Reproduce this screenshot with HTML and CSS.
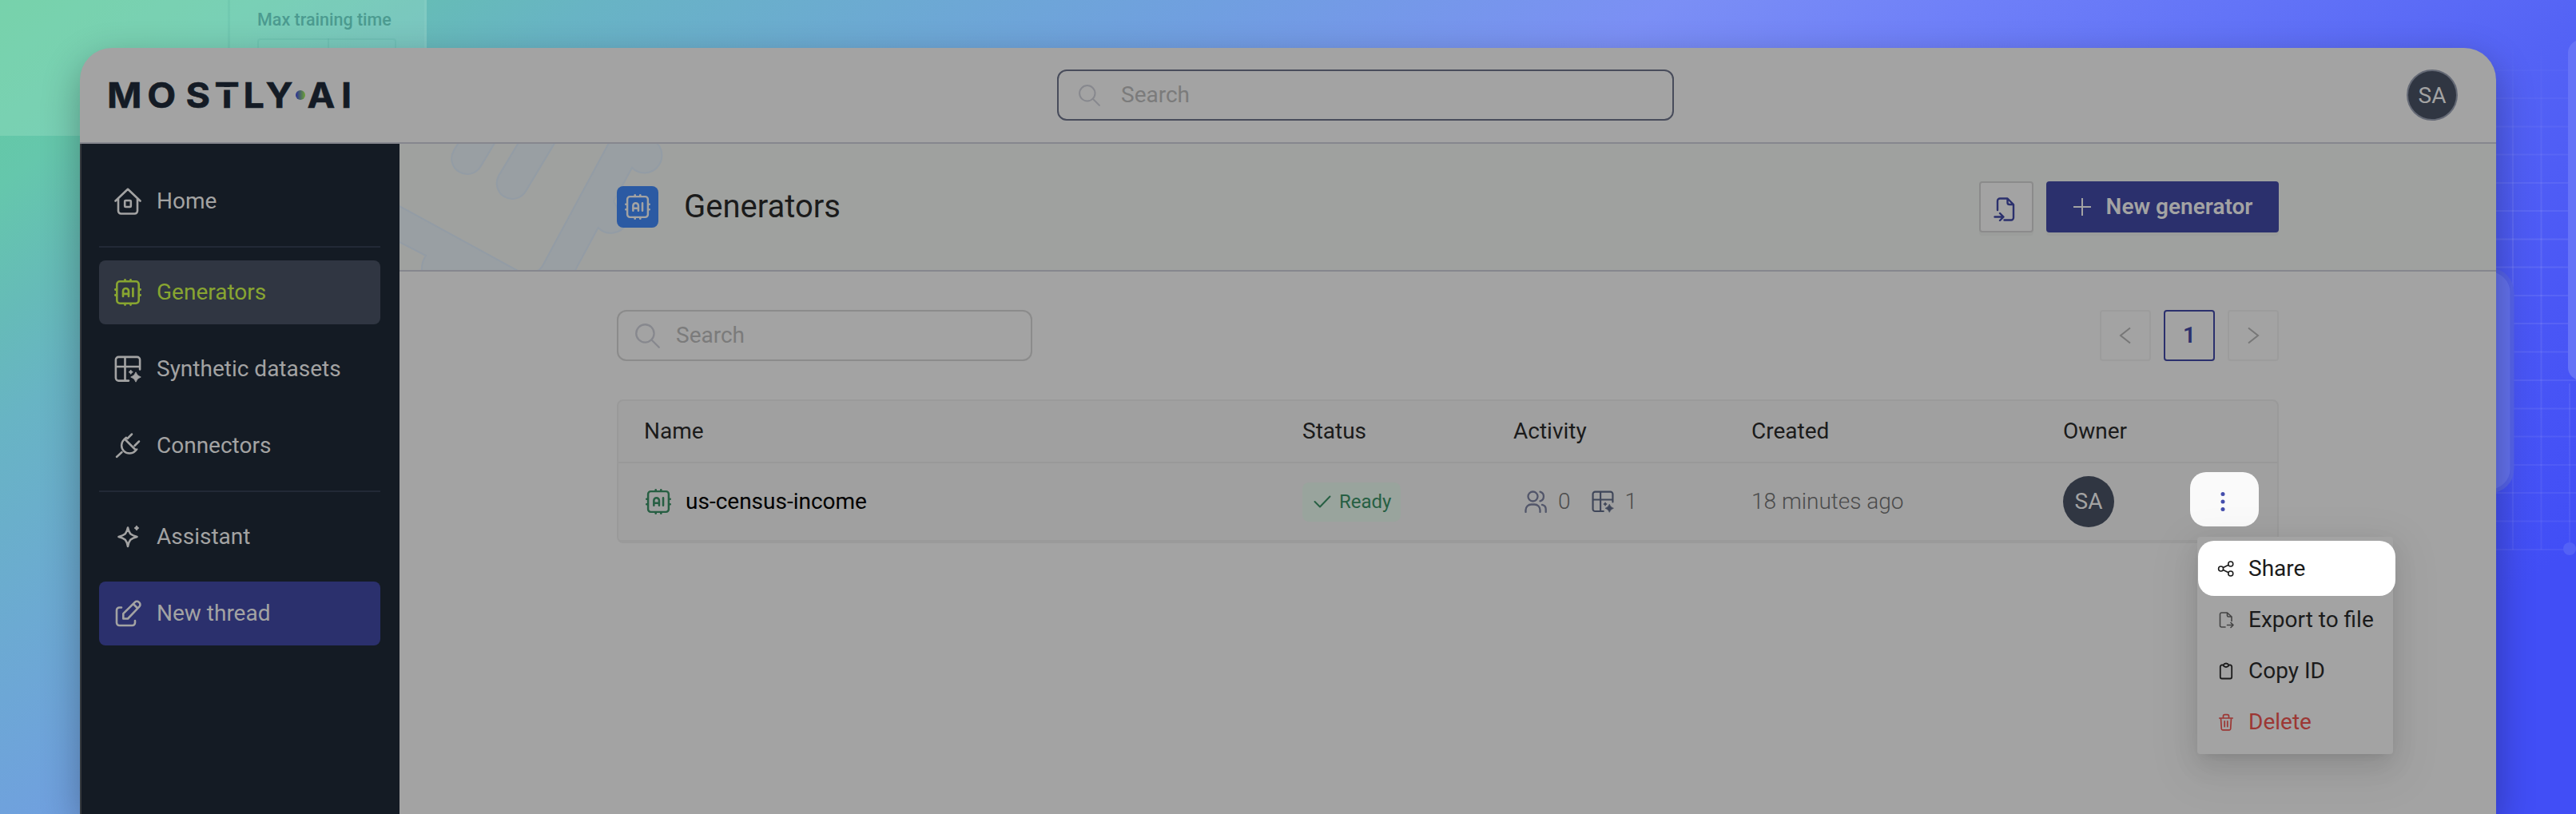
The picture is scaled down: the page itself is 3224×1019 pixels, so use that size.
FILE: index.html
```html
<!DOCTYPE html>
<html lang="en">
<head>
<meta charset="utf-8">
<title>MOSTLY AI – Generators</title>
<link rel="stylesheet" href="styles.css">
</head>
<body>
<svg class="defs" width="0" height="0" aria-hidden="true">
  <defs>
    <symbol id="i-chip" viewBox="0 0 34 34">
      <g fill="none" stroke="currentColor" stroke-linecap="round" stroke-linejoin="round">
        <rect x="3.300" y="3.300" width="27.400" height="27.400" rx="3.600" stroke-width="2.600"/>
        <path stroke-width="2.800" d="M13.500 1.400v1M20.500 1.400v1M13.500 31.600v1M20.500 31.600v1M1.400 13.500h1M1.400 20.500h1M31.600 13.500h1M31.600 20.500h1"/>
        <path stroke-width="2.700" d="M11 22v-6.500a3.500 3.500 0 0 1 7 0V22M11 18.800h7M23.400 12v10"/>
      </g>
    </symbol>
    <symbol id="i-grid" viewBox="0 0 34 34">
      <path fill="none" stroke="currentColor" stroke-width="2.600" stroke-linecap="round" stroke-linejoin="round" d="M18 31.600H5.400a3.500 3.500 0 0 1-3.500-3.500V5.400a3.500 3.500 0 0 1 3.500-3.500h23.200a3.500 3.500 0 0 1 3.500 3.500V17.500M2 14h30M13.500 2v29.500"/>
      <path fill="currentColor" d="M27 20.800q1.600 4.800 6.300 6.200q-4.700 1.400-6.300 6.200q-1.600-4.800-6.300-6.200q4.700-1.400 6.300-6.200zM20.700 18q.7 2 2.700 2.700q-2 .7-2.700 2.700q-.7-2-2.700-2.700q2-.7 2.700-2.700z" stroke="currentColor" stroke-width=".8"/>
    </symbol>
    <symbol id="i-search" viewBox="0 0 30 30">
      <g fill="none" stroke="currentColor" stroke-width="2.200" stroke-linecap="round"><circle cx="12" cy="12" r="10.800"/><path d="M19.800 19.800l9 9"/></g>
    </symbol>
    <linearGradient id="dot"><stop offset="0" stop-color="#2b2f96"/><stop offset="1" stop-color="#6ba335"/></linearGradient>
    <linearGradient id="fade" x1="0" y1="0" x2="0" y2="1"><stop offset="0" stop-color="#fff" stop-opacity="0"/><stop offset=".2" stop-color="#fff" stop-opacity=".6"/><stop offset=".4" stop-color="#fff"/><stop offset="1" stop-color="#fff" stop-opacity=".6"/></linearGradient>
    <mask id="gridfade" maskUnits="userSpaceOnUse" x="0" y="0" width="124" height="1019"><rect y="40" width="124" height="655" fill="url(#fade)"/></mask>
  </defs>
</svg>

<div class="backdrop" aria-hidden="true">
  <div class="ghost-left">
    <span class="ghost-label">Max training time</span>
    <span class="ghost-input"></span>
  </div>
  <svg class="ghost-right" width="124" height="1019" viewBox="0 0 124 1019">
    <g stroke="#fff" stroke-opacity=".09" stroke-width="2" fill="none" mask="url(#gridfade)">
      <path d="M45 60V688M80.500 60V688M116 480V688"/>
      <path d="M0 53h124M0 88h124M0 123h124M0 158.500h124M0 193.500h124M0 229h124M0 264h124M0 299.500h124M0 334.500h124M0 370h124M0 405h124M0 440.500h124M0 476h124M0 511.500h124M0 546.500h124M0 582h124M0 617h124M0 652.500h124M0 688h116"/>
    </g>
    <circle cx="116" cy="687" r="8" fill="#5361f6"/>
    <rect x="114" y="50" width="60" height="426" rx="16" fill="#6673f7"/>
    <rect x="-60" y="338" width="104" height="277" rx="28" fill="#6472ef" stroke="#5563ea" stroke-width="5"/>
  </svg>
</div>

<div class="window">
  <header class="topbar">
    <svg class="logo" width="326" height="60" viewBox="-10 0 326 60">
      <text class="logo-text" y="46" transform="scale(1.060 1)" x="-2 45.500 91 125 159 185.500 234.500 274.500">MOSTLYAI</text>
      <path d="M132 20h33v3.500h-33z" fill="#a3a3a3"/>
      <circle cx="240" cy="30" r="6" fill="url(#dot)"/>
    </svg>
    <div class="field field-top"><svg width="27" height="27"><use href="#i-search"/></svg><span>Search</span></div>
    <div class="avatar avatar-top">SA</div>
  </header>

  <div class="body">
    <nav class="sidebar">
      <a class="nav">
        <svg width="34" height="34" viewBox="0 0 34 34" fill="none" stroke="currentColor" stroke-width="2.600" stroke-linecap="round" stroke-linejoin="round"><path d="M1.500 16.500L17 1.800l15.500 14.700M5 14v15a3.500 3.500 0 0 0 3.500 3.500h17A3.500 3.500 0 0 0 29 29V14"/><rect x="13.200" y="16" width="7.600" height="8" rx="1"/></svg>
        Home</a>
      <hr>
      <a class="nav active"><svg width="34" height="34"><use href="#i-chip"/></svg>Generators</a>
      <a class="nav"><svg width="34" height="34"><use href="#i-grid"/></svg>Synthetic datasets</a>
      <a class="nav">
        <svg width="34" height="34" viewBox="0 0 34 34" fill="none" stroke="currentColor" stroke-width="2.500" stroke-linecap="round" stroke-linejoin="round"><path d="M13 8.500L26.500 22M15 6.800L12 9.500a10.200 10.200 0 0 0 0 14.200a10.200 10.200 0 0 0 14.200 0l2-2.200M16.500 8L22 2.500M25.500 17L31 11.500M9.500 25L3 31"/></svg>
        Connectors</a>
      <hr>
      <a class="nav">
        <svg width="34" height="34" viewBox="0 0 34 34" fill="none" stroke="currentColor" stroke-width="2.600" stroke-linejoin="round"><path d="M17 5.500q1 5 3.200 7.800q2.800 2.200 8.300 3.700q-5.500 1.500-8.300 3.700q-2.200 2.800-3.200 8.300q-1-5.500-3.200-8.300q-2.800-2.200-8.300-3.700q5.500-1.500 8.300-3.700q2.200-2.800 3.200-7.800z"/><path d="M28 3.800q.6 1.600 2.200 2.200q-1.600.6-2.200 2.200q-.6-1.600-2.200-2.200q1.600-.6 2.200-2.200z" fill="currentColor" stroke-width="1.800"/></svg>
        Assistant</a>
      <a class="nav primary">
        <svg width="34" height="34" viewBox="0 0 34 34" fill="none" stroke="currentColor" stroke-width="2.600" stroke-linecap="round" stroke-linejoin="round"><path d="M9 9.500H6.500A3.500 3.500 0 0 0 3 13v15.500A3.500 3.500 0 0 0 6.500 32h16a3.500 3.500 0 0 0 3.500-3.500V26M11.300 23.500v-6.300L25.800 2.800a3.500 3.500 0 0 1 5 0l.6.600a3.500 3.500 0 0 1 0 5L17 23.500zM23.800 5l5.500 5.500"/></svg>
        New thread</a>
    </nav>

    <main class="main">
      <section class="pagehead">
        <svg class="pattern" width="340" height="158" viewBox="0 0 340 158" fill="#999fa3" stroke="#939ca5" stroke-width="2" aria-hidden="true">
          <rect x="-19.500" y="-90" width="39" height="110" rx="19.500" transform="translate(85 18) rotate(31)"/>
          <rect x="-19.500" y="-110" width="39" height="130" rx="19.500" transform="translate(141.500 49) rotate(31)"/>
          <path d="M262-1L180 151q-4 8-10 9h49L248.600 105A22 22 0 0 0 284 100L268 72L291 30A21 21 0 0 0 322-1z"/>
          <path d="M-2 77L150 160H28q-1-11 5-20L-2 122z"/>
        </svg>
        <div class="wrap headrow">
          <span class="tile"><svg width="32" height="32"><use href="#i-chip"/></svg></span>
          <h1>Generators</h1>
          <button class="btn btn-icon" aria-label="Import">
            <svg width="28" height="30" viewBox="0 0 28 30" fill="none" stroke="currentColor" stroke-width="2.400" stroke-linecap="round" stroke-linejoin="round"><path d="M5 16V4.500A3 3 0 0 1 8 1.500h9.500L25 9v16.500a3 3 0 0 1-3 3h-8.500M17.500 2v4.500A2.500 2.500 0 0 0 20 9h4.500M1.500 24.500H12M8 20l4.500 4.500L8 29"/></svg>
          </button>
          <button class="btn btn-new">
            <svg width="24" height="24" viewBox="0 0 24 24" fill="none" stroke="currentColor" stroke-width="2"><path d="M12 1v22M1 12h22"/></svg>
            New generator</button>
        </div>
      </section>

      <section class="wrap content">
        <div class="tools">
          <div class="field field-list"><svg width="31" height="31"><use href="#i-search"/></svg><span>Search</span></div>
          <div class="pager">
            <span class="page"><svg width="16" height="22" viewBox="0 0 16 22" fill="none" stroke="currentColor" stroke-width="2"><path d="M14 1.500L2 11l12 9.500"/></svg></span>
            <span class="page current">1</span>
            <span class="page"><svg width="16" height="22" viewBox="0 0 16 22" fill="none" stroke="currentColor" stroke-width="2"><path d="M2 1.500L14 11L2 20.500"/></svg></span>
          </div>
        </div>

        <div class="table">
          <div class="tr th"><span>Name</span><span>Status</span><span>Activity</span><span>Created</span><span>Owner</span><span></span></div>
          <div class="tr td">
            <span class="name"><svg width="32" height="32"><use href="#i-chip"/></svg>us-census-income</span>
            <span><span class="tag"><svg width="22" height="16" viewBox="0 0 22 16" fill="none" stroke="currentColor" stroke-width="2" stroke-linecap="round" stroke-linejoin="round"><path d="M1.500 8l6.500 6.500L20.500 1.500"/></svg>Ready</span></span>
            <span class="activity">
              <svg width="28" height="28" viewBox="0 0 28 28" fill="none" stroke="currentColor" stroke-width="2.300" stroke-linecap="round"><ellipse cx="10.500" cy="7.500" rx="6" ry="6"/><path d="M1.500 27v-2.500a7 7 0 0 1 7-7h4a7 7 0 0 1 7 7V27M19.500 1.700a6 6 0 0 1 0 11.600M22 17.800a6 6 0 0 1 4.700 6V27"/></svg>
              <span class="light n0">0</span>
              <svg class="dk" width="28" height="28"><use href="#i-grid"/></svg>
              <span class="light">1</span>
            </span>
            <span class="light">18 minutes ago</span>
            <span><span class="avatar">SA</span></span>
            <span class="more-cell">
              <button class="more" aria-label="More"><svg width="8" height="26" viewBox="0 0 8 26" fill="#444eac"><circle cx="4" cy="3.500" r="2.500"/><circle cx="4" cy="13" r="2.500"/><circle cx="4" cy="22.500" r="2.500"/></svg></button>
              <span class="menu">
                <a class="item hot"><svg width="22" height="22" viewBox="0 0 22 22" fill="none" stroke="currentColor" stroke-width="1.600"><circle cx="4.600" cy="11" r="3"/><circle cx="16.800" cy="5" r="3"/><circle cx="16.800" cy="17" r="3"/><path d="M7.500 9.500l6.500-3.200M7.500 12.500l6.500 3.200"/></svg>Share</a>
                <a class="item soft"><svg width="22" height="22" viewBox="0 0 22 22" fill="none" stroke="currentColor" stroke-width="1.600" stroke-linecap="round" stroke-linejoin="round"><path d="M10 20H5.500a2 2 0 0 1-2-2V4a2 2 0 0 1 2-2h7L18 7v5.500M12.500 2v3.500A1.500 1.500 0 0 0 14 7h4M12.500 17.500H20M17 14.500l3 3l-3 3"/></svg><span>Export to file</span></a>
                <a class="item"><svg width="22" height="22" viewBox="0 0 22 22" fill="none" stroke="currentColor" stroke-width="1.800" stroke-linejoin="round"><path d="M7.500 3.500H5.800A2 2 0 0 0 3.800 5.500v13a2 2 0 0 0 2 2h10.400a2 2 0 0 0 2-2v-13a2 2 0 0 0-2-2H14.500M7.800 3.500Q8.500 1.500 11 1.500T14.200 3.500Q14 6 11 6T7.800 3.500z"/></svg>Copy ID</a>
                <a class="item danger"><svg width="22" height="22" viewBox="0 0 22 22" fill="none" stroke="currentColor" stroke-width="1.700" stroke-linecap="round" stroke-linejoin="round"><path d="M2.800 6h16.400M4.500 6l.8 13.500a1.500 1.500 0 0 0 1.500 1.300h8.400a1.500 1.500 0 0 0 1.500-1.300L17.500 6M7.500 6V3.500a1.800 1.800 0 0 1 1.800-1.800h3.400a1.800 1.800 0 0 1 1.800 1.800V6M9.200 9.800v6.800M12.800 9.800v6.800"/></svg>Delete</a>
              </span>
            </span>
          </div>
        </div>
      </section>
    </main>
  </div>
</div>
</body>
</html>
```

FILE: styles.css
```css
* { box-sizing: border-box; }

html, body { margin: 0; height: 1019px; overflow: hidden; }

body {
  position: relative;
  width: 3224px;
  font: 400 28px/40px Roboto, "Liberation Sans", sans-serif;
  color: #1b1b1b;
  background: linear-gradient(144.5deg, #62ca9e 0%, #65c7ac 7%, #66bbb8 12%, #68b4c4 16%, #6caad2 24%, #709fe0 33%, #7b8ff5 45%, #6f80f8 53%, #6273f7 61%, #5463f5 70%, #4a57f5 80%, #414ef6 90%, #414ef6 100%);
}

.defs { position: absolute; }
svg { display: block; flex: none; }
button { font: inherit; margin: 0; padding: 0; border: 0; }

/* Decorative layer behind the window */
.backdrop { position: absolute; inset: 0; }
.ghost-left {
  width: 534px;
  height: 170px;
  padding: 5px 0 0 322px;
  background: linear-gradient(90deg, transparent 285px, rgba(60, 150, 140, .12) 285px, rgba(60, 150, 140, .12) 288px, transparent 288px), rgba(190, 240, 215, .24);
  border-right: 3px solid rgba(255, 255, 255, .06);
}
.ghost-label { display: block; font-size: 21.5px; font-weight: 500; color: #4c9b90; }
.ghost-input { display: block; width: 174px; height: 70px; margin-top: 3px; border: 2px solid rgba(70, 160, 150, .16); border-radius: 4px; background: linear-gradient(90deg, transparent 86px, rgba(70, 160, 150, .16) 86px, rgba(70, 160, 150, .16) 88px, transparent 88px); }
.ghost-right { position: absolute; right: 0; top: 0; }

.window {
  position: relative;
  display: flex;
  flex-direction: column;
  width: 3024px;
  height: 959px;
  margin: 60px 100px 0;
  background: #a3a3a3;
  border-radius: 40px 40px 0 0;
  box-shadow: 0 16px 48px rgba(0, 0, 0, .3);
}

/* Top bar */
.topbar {
  display: flex;
  align-items: center;
  height: 120px;
  padding: 0 48px 0 26px;
  border-bottom: 2px solid #86878e;
}
.logo-text { font: 700 44px Inter, "Liberation Sans", sans-serif; fill: #141b25; stroke: #141b25; stroke-width: .6px; }

.field {
  display: flex;
  align-items: center;
  height: 64px;
  color: #87888e;
  border: 2px solid #8b8b8b;
  border-radius: 12px;
}
.field span { color: #7b7b7b; }
.field-top { width: 772px; margin-left: 871px; padding-left: 25px; gap: 26px; border-color: #484c5b; }
.field-list { width: 520px; padding-left: 21px; gap: 20px; }

.avatar {
  display: flex;
  align-items: center;
  justify-content: center;
  width: 64px;
  height: 64px;
  border-radius: 50%;
  background: #303642;
  color: #a3a3a3;
}
.avatar-top { margin-left: auto; border: 2px solid #646975; padding-top: 1px; }

.body { display: flex; flex: 1; min-height: 0; }

/* Sidebar */
.sidebar {
  width: 400px;
  padding: 32px 24px 0 22px;
  background: #141b24;
  border-left: 2px solid #34383d;
}
.nav {
  display: flex;
  align-items: center;
  gap: 19px;
  height: 80px;
  margin-bottom: 16px;
  padding-left: 19px;
  border-radius: 8px;
  color: #a3a3a3;
}
.nav.active { background: #303642; color: #88a531; }
.nav.primary { background: #2b306d; }
.sidebar hr { height: 2px; margin: 0 0 16px; border: 0; background: #222936; }

/* Page header */
.main { flex: 1; min-width: 0; }
.wrap { width: 2080px; margin: 0 auto; }
.pagehead { position: relative; height: 160px; background: #9fa19f; border-bottom: 2px solid #86878e; }
.pattern { position: absolute; left: 0; top: 0; }
.headrow { position: relative; display: flex; align-items: center; height: 158px; }
.tile { display: flex; align-items: center; justify-content: center; width: 52px; height: 52px; border-radius: 8px; background: #2b5aa3; color: #a3a3a3; }
h1 { margin: 0 auto 0 32px; font-size: 40px; font-weight: 400; line-height: 48px; }
.btn { display: flex; align-items: center; justify-content: center; height: 64px; border-radius: 4px; box-shadow: 0 4px 0 rgba(0, 0, 0, .025); }
.btn-icon { width: 68px; margin-right: 16px; padding: 6px 4px 0 0; color: #2b306d; background: #a3a3a3; border: 2px solid #8b8b8b; }
.btn-new { width: 291px; gap: 18px; color: #a3a3a3; background: #2b306d; font-weight: 600; }

/* List */
.content { padding-top: 48px; }
.tools { display: flex; justify-content: space-between; }
.pager { display: flex; gap: 16px; }
.page { display: flex; align-items: center; justify-content: center; width: 64px; height: 64px; border: 2px solid #9c9c9c; border-radius: 4px; color: #777; }
.page.current { border-color: #2b306d; color: #2b306d; font-weight: 600; }

.table { margin-top: 48px; border: 2px solid #9a9a9a; border-radius: 8px; background: #a0a0a0; }
.tr { display: grid; grid-template-columns: 824px 264px 298px 390px 159px 1fr; align-items: center; padding-left: 32px; }
.th { height: 78px; border-bottom: 2px solid #999; }
.td { height: 98px; border-bottom: 2px solid #9a9a9a; }
.name { display: flex; align-items: center; gap: 18px; color: #000; }
.name svg { color: #275f43; margin-left: 2px; }
.tag { display: inline-flex; align-items: center; gap: 10px; height: 49px; padding: 0 12px 0 14px; border-radius: 8px; background: #99a49d; color: #275f43; font-size: 24px; vertical-align: middle; }
.activity { display: flex; align-items: center; padding-left: 14px; color: #52566a; }
.dk { color: #3f4659; }
.light { font-weight: 300; color: #4b4b4b; }
.activity .light { margin-left: 14px; }
.activity .n0 { margin-right: 26px; }

/* Row menu */
.more-cell { position: relative; height: 68px; }
.more { display: flex; align-items: center; justify-content: center; width: 86px; height: 68px; margin-top: -3px; padding: 6px 4px 0 0; border-radius: 20px; background: #fafafa; }
.menu {
  position: absolute;
  left: 9px;
  top: 78px;
  width: 245px;
  height: 272px;
  padding-top: 8px;
  border-radius: 4px;
  background: #a3a3a3;
  box-shadow: 0 6px 12px -8px rgba(0, 0, 0, .12), 0 12px 32px rgba(0, 0, 0, .1), 0 18px 56px 16px rgba(0, 0, 0, .05);
}
.item { display: flex; align-items: center; gap: 17px; height: 64px; padding-left: 25px; white-space: nowrap; }
.item.hot { width: 247px; height: 69px; margin: -3px 0 -2px 1px; padding: 0 0 0 24px; border-radius: 20px; background: #fff; }
.item.soft svg { color: #444; }
.item.danger { color: #9c3734; }
```
